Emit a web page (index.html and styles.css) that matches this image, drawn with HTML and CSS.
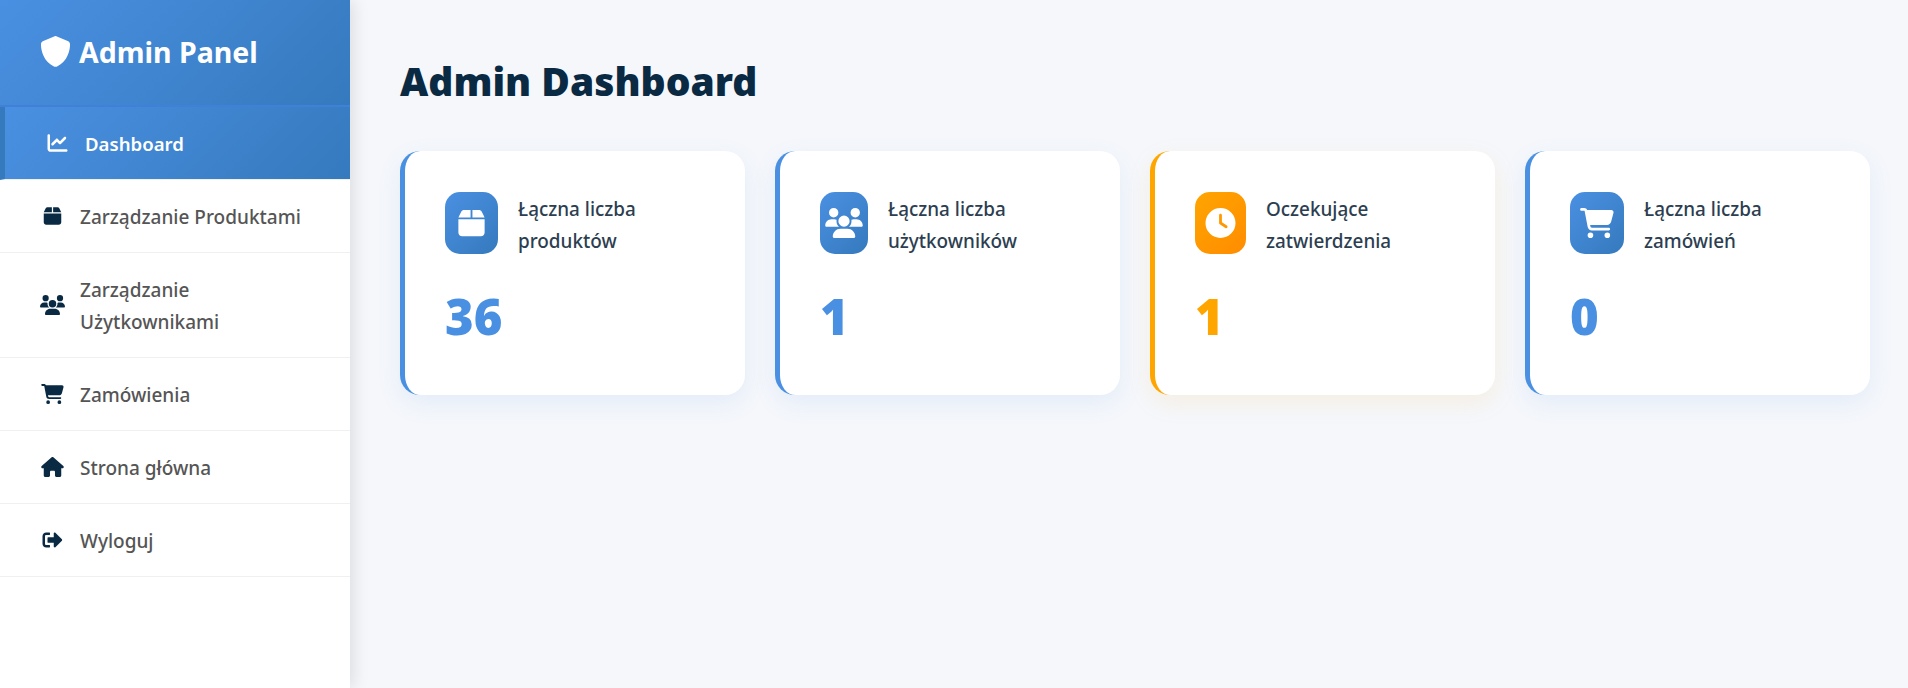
FILE: index.html
```html
<!DOCTYPE html>
<html lang="pl">
<head>
    <meta charset="UTF-8">
    <meta name="viewport" content="width=device-width, initial-scale=1.0">
    <title>Admin Panel</title>
    <link rel="stylesheet" href="styles.css">
</head>
<body>
    <!-- Icon set -->
    <svg class="sprite" aria-hidden="true">
        <symbol id="i-shield" viewBox="0 0 512 512"><path d="M256 0c4.6 0 9.2 1 13.4 2.9L457.7 82.8c22 9.3 38.4 31 38.3 57.2c-.5 99.2-41.3 280.7-213.6 363.2c-16.7 8-36.1 8-52.8 0C57.3 420.7 16.5 239.2 16 140c-.1-26.2 16.3-47.9 38.3-57.2L242.7 2.9C246.8 1 251.4 0 256 0z"/></symbol>
        <symbol id="i-chart" viewBox="0 0 512 512"><path d="M64 64c0-17.7-14.3-32-32-32S0 46.3 0 64V400c0 44.2 35.8 80 80 80H480c17.7 0 32-14.3 32-32s-14.3-32-32-32H80c-8.8 0-16-7.2-16-16V64zm406.6 86.6c12.5-12.5 12.5-32.8 0-45.3s-32.8-12.5-45.3 0L320 210.7l-57.4-57.4c-12.5-12.5-32.8-12.5-45.3 0l-112 112c-12.5 12.5-12.5 32.8 0 45.3s32.8 12.5 45.3 0L240 221.3l57.4 57.4c12.5 12.5 32.8 12.5 45.3 0l128-128z"/></symbol>
        <symbol id="i-box" viewBox="0 0 448 512"><path d="M50.7 58.5L0 160H208V32H93.7C75.5 32 58.9 42.3 50.7 58.5zM240 160H448L397.3 58.5C389.1 42.3 372.5 32 354.3 32H240V160zm208 32H0V416c0 35.3 28.7 64 64 64H384c35.3 0 64-28.7 64-64V192z"/></symbol>
        <symbol id="i-users" viewBox="0 0 640 512"><path d="M144 0a80 80 0 1 1 0 160A80 80 0 1 1 144 0zM512 0a80 80 0 1 1 0 160A80 80 0 1 1 512 0zM0 298.7C0 239.8 47.8 192 106.7 192h42.7c15.9 0 31 3.5 44.6 9.7c-1.3 7.2-1.9 14.7-1.9 22.3c0 38.2 16.8 72.5 43.3 96c-.2 0-.4 0-.7 0H21.3C9.6 320 0 310.4 0 298.7zM405.3 320c-.2 0-.4 0-.7 0c26.6-23.5 43.3-57.8 43.3-96c0-7.6-.7-15-1.9-22.3c13.6-6.3 28.7-9.7 44.6-9.7h42.7C592.2 192 640 239.8 640 298.7c0 11.8-9.6 21.3-21.3 21.3H405.3zM224 224a96 96 0 1 1 192 0 96 96 0 1 1 -192 0zM128 485.3C128 411.7 187.7 352 261.3 352H378.7C452.3 352 512 411.7 512 485.3c0 14.7-11.9 26.7-26.7 26.7H154.7c-14.7 0-26.7-11.9-26.7-26.7z"/></symbol>
        <symbol id="i-cart" viewBox="0 0 576 512"><path d="M0 24C0 10.7 10.7 0 24 0H69.5c22 0 41.5 12.8 50.6 32h411c26.3 0 45.5 25 38.6 50.4l-41 152.3c-8.5 31.4-37 53.3-69.5 53.3H170.7l5.4 28.5c2.2 11.3 12.1 19.5 23.6 19.5H488c13.3 0 24 10.7 24 24s-10.7 24-24 24H199.7c-34.6 0-64.3-24.6-70.7-58.5L77.4 54.5c-.7-3.8-4-6.5-7.9-6.5H24C10.7 48 0 37.3 0 24zM128 464a48 48 0 1 1 96 0 48 48 0 1 1 -96 0zm336-48a48 48 0 1 1 0 96 48 48 0 1 1 0-96z"/></symbol>
        <symbol id="i-house" viewBox="0 0 576 512"><path d="M575.8 255.5c0 18-15 32.1-32 32.1h-32l.7 160.2c0 2.7-.2 5.4-.5 8.1V472c0 22.1-17.9 40-40 40H456c-1.1 0-2.2 0-3.3-.1c-1.4 .1-2.8 .1-4.2 .1H416 392c-22.1 0-40-17.9-40-40V448 384c0-17.7-14.3-32-32-32H256c-17.7 0-32 14.3-32 32v64 24c0 22.1-17.9 40-40 40H160 128.1c-1.5 0-3-.1-4.5-.2c-1.2 .1-2.4 .2-3.6 .2H104c-22.1 0-40-17.9-40-40V360c0-.9 0-1.9 .1-2.8V287.6H32c-18 0-32-14-32-32.1c0-9 3-17 10-24L266.4 8c7-7 15-8 22-8s15 2 21 7L564.8 231.5c8 7 12 15 11 24z"/></symbol>
        <symbol id="i-logout" viewBox="0 0 512 512"><path d="M497 273L329 441c-15 15-41 4.5-41-17v-96H152c-13.3 0-24-10.7-24-24v-96c0-13.3 10.7-24 24-24h136V88c0-21.4 25.9-32 41-17l168 168c9.3 9.4 9.3 24.6 0 34zM192 436v-40c0-6.6-5.4-12-12-12H96c-17.7 0-32-14.3-32-32V160c0-17.7 14.3-32 32-32h84c6.6 0 12-5.4 12-12V76c0-6.6-5.4-12-12-12H96c-53 0-96 43-96 96v192c0 53 43 96 96 96h84c6.6 0 12-5.4 12-12z"/></symbol>
        <symbol id="i-clock" viewBox="0 0 512 512"><path d="M256 0a256 256 0 1 1 0 512A256 256 0 1 1 256 0zM232 120V256c0 8 4 15.5 10.7 20l96 64c11 7.4 25.9 4.4 33.3-6.7s4.4-25.9-6.7-33.3L280 243.2V120c0-13.3-10.7-24-24-24s-24 10.7-24 24z"/></symbol>
    </svg>

    <div class="layout">
        <aside class="sidebar">
            <div class="sidebar-header">
                <svg class="logo-icon"><use href="#i-shield"/></svg>
                <h2>Admin Panel</h2>
            </div>
            <nav>
                <a href="#" class="nav-item active">
                    <span class="nav-icon"><svg><use href="#i-chart"/></svg></span>
                    <span>Dashboard</span>
                </a>
                <a href="#" class="nav-item">
                    <span class="nav-icon"><svg><use href="#i-box"/></svg></span>
                    <span>Zarządzanie Produktami</span>
                </a>
                <a href="#" class="nav-item">
                    <span class="nav-icon"><svg><use href="#i-users"/></svg></span>
                    <span>Zarządzanie<br>Użytkownikami</span>
                </a>
                <a href="#" class="nav-item">
                    <span class="nav-icon"><svg><use href="#i-cart"/></svg></span>
                    <span>Zamówienia</span>
                </a>
                <a href="#" class="nav-item">
                    <span class="nav-icon"><svg><use href="#i-house"/></svg></span>
                    <span>Strona główna</span>
                </a>
                <a href="#" class="nav-item">
                    <span class="nav-icon"><svg><use href="#i-logout"/></svg></span>
                    <span>Wyloguj</span>
                </a>
            </nav>
        </aside>

        <main class="main">
            <h1>Admin Dashboard</h1>
            <div class="stats">
                <div class="stat-card">
                    <div class="stat-head">
                        <div class="stat-icon w-products"><svg><use href="#i-box"/></svg></div>
                        <div class="stat-label">Łączna liczba<br>produktów</div>
                    </div>
                    <div class="stat-number">36</div>
                </div>
                <div class="stat-card">
                    <div class="stat-head">
                        <div class="stat-icon w-users"><svg><use href="#i-users"/></svg></div>
                        <div class="stat-label">Łączna liczba<br>użytkowników</div>
                    </div>
                    <div class="stat-number">1</div>
                </div>
                <div class="stat-card pending">
                    <div class="stat-head">
                        <div class="stat-icon w-pending"><svg><use href="#i-clock"/></svg></div>
                        <div class="stat-label">Oczekujące<br>zatwierdzenia</div>
                    </div>
                    <div class="stat-number">1</div>
                </div>
                <div class="stat-card">
                    <div class="stat-head">
                        <div class="stat-icon w-orders"><svg><use href="#i-cart"/></svg></div>
                        <div class="stat-label">Łączna liczba<br>zamówień</div>
                    </div>
                    <div class="stat-number">0</div>
                </div>
            </div>
        </main>
    </div>
</body>
</html>
```

FILE: styles.css
```css
* {
    box-sizing: border-box;
}
body {
    margin: 0;
    background-color: #f5f7fb;
    font-family: "Noto Sans", "Open Sans", sans-serif;
}
.sprite {
    display: none;
}
.layout {
    display: flex;
    min-height: 688px;
}

/* Sidebar */
.sidebar {
    width: 350px;
    flex: none;
    background-color: white;
    box-shadow: 4px 0 15px rgba(0, 0, 0, 0.1);
}
.sidebar-header {
    display: flex;
    align-items: center;
    gap: 8px;
    height: 107px;
    padding: 0 40px 2px;
    background: linear-gradient(135deg, #4a90e2, #357abd);
    border-bottom: 2px solid #4080d8;
    color: white;
}
.logo-icon {
    width: 31px;
    height: 31px;
    fill: white;
}
.sidebar-header h2 {
    margin: 0;
    font-size: 28.5px;
    font-weight: 700;
}
.nav-item {
    display: flex;
    align-items: center;
    gap: 15px;
    padding: 21px 40px 19px;
    border-bottom: 1px solid #f0f0f0;
    color: #555;
    font-size: 19px;
    font-weight: 500;
    line-height: 32px;
    text-decoration: none;
}
.nav-icon {
    display: flex;
    justify-content: center;
    width: 25px;
    margin-bottom: 2px;
    flex: none;
}
.nav-icon svg {
    width: 25px;
    height: 20px;
    fill: #0a2a43;
}
.nav-item.active {
    padding-left: 40px;
    border-left: 5px solid #357abd;
    background: linear-gradient(135deg, #4a90e2, #357abd);
    color: white;
    font-size: 18.6px;
    font-weight: 600;
}
.nav-item.active .nav-icon svg {
    fill: white;
}

/* Main content */
.main {
    flex: 1;
    padding: 49px 38px 0 50px;
}
.main h1 {
    margin: 0 0 39px;
    color: #0a2a43;
    font-size: 39px;
    font-weight: 900;
    line-height: 63px;
}
.stats {
    display: grid;
    grid-template-columns: repeat(4, 1fr);
    gap: 30px;
}
.stat-card {
    height: 244px;
    padding: 40px;
    background-color: white;
    border-left: 5px solid #4a90e2;
    border-radius: 20px;
    box-shadow: 0 8px 25px rgba(74, 144, 226, 0.1);
}
.stat-head {
    display: flex;
    align-items: flex-start;
    gap: 20px;
}
.stat-icon {
    display: flex;
    align-items: center;
    justify-content: center;
    height: 62px;
    margin-top: 1px;
    flex: none;
    background: linear-gradient(135deg, #4a90e2, #357abd);
    border-radius: 15px;
}
.stat-icon svg {
    width: 100%;
    height: 30px;
    fill: white;
}
.w-products {
    width: 53px;
}
.w-users {
    width: 48px;
}
.w-pending {
    width: 51px;
}
.w-orders {
    width: 54px;
}
.stat-label {
    margin-top: 2px;
    color: #2c3e50;
    font-size: 18.9px;
    font-weight: 500;
    line-height: 32px;
}
.stat-number {
    margin-top: 17px;
    color: #4a90e2;
    font-size: 49px;
    font-weight: 900;
    line-height: 85px;
}
.pending {
    border-left-color: #ffa500;
    box-shadow: 0 8px 25px rgba(255, 165, 0, 0.1);
}
.pending .stat-icon {
    background: linear-gradient(135deg, #ffa500, #ff8c00);
}
.pending .stat-number {
    color: #ffa500;
}
```
